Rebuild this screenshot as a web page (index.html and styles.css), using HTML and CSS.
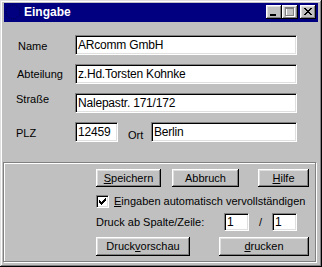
FILE: index.html
```html
<!DOCTYPE html>
<html lang="de">
<head>
<meta charset="utf-8">
<title>Eingabe</title>
<link rel="stylesheet" href="styles.css">
</head>
<body>
<div class="window">
  <div class="titlebar">
    <svg class="app-icon" width="16" height="16" viewBox="0 0 16 16"><circle cx="8" cy="8" r="7" fill="none" stroke="#00004a" stroke-width="1" stroke-dasharray="1 1"/></svg>
    <span class="title">Eingabe</span>
    <div class="tb-buttons">
      <div class="tb-btn"><svg width="16" height="14" viewBox="0 0 16 14"><rect x="4" y="9" width="6" height="2" fill="#000"/></svg></div>
      <div class="tb-btn"><svg width="16" height="14" viewBox="0 0 16 14"><path d="M4 3h9v1H4z M4 4h1v8H4z M12 4h1v8h-1z M4 11h9v1H4z" fill="#fff"/><path d="M3 2h9v2H3z M3 4h1v7H3z M11 4h1v7h-1z M3 10h9v1H3z" fill="#808080"/></svg></div>
      <div class="tb-btn tb-close"><svg width="16" height="14" viewBox="0 0 16 14"><path d="M4 3h2v1h-2z M10 3h2v1h-2z M5 4h2v1h-2z M9 4h2v1h-2z M6 5h4v1h-4z M7 6h2v1h-2z M6 7h4v1h-4z M5 8h2v1h-2z M9 8h2v1h-2z M4 9h2v1h-2z M10 9h2v1h-2z" fill="#000"/></svg></div>
    </div>
  </div>

  <div class="form">
    <div class="row">
      <span class="lbl lbl-low ind-2">Name</span>
      <div class="field f-wide">ARcomm GmbH</div>
    </div>
    <div class="row">
      <span class="lbl ind-1">Abteilung</span>
      <div class="field f-wide">z.Hd.Torsten Kohnke</div>
    </div>
    <div class="row">
      <span class="lbl lbl-high">Straße</span>
      <div class="field f-wide">Nalepastr. 171/172</div>
    </div>
    <div class="row">
      <span class="lbl lbl-low">PLZ</span>
      <div class="field f-plz">12459</div>
      <span class="lbl-ort">Ort</span>
      <div class="field f-ort">Berlin</div>
    </div>
  </div>

  <div class="panel">
    <div class="btn-row">
      <div class="btn b-speichern"><span><u>S</u>peichern</span></div>
      <div class="btn b-abbruch"><span>Abbruch</span></div>
      <div class="btn b-hilfe"><span><u>H</u>ilfe</span></div>
    </div>
    <div class="check-row">
      <div class="checkbox"><svg width="11" height="11" viewBox="0 0 11 11"><path d="M2 4h1v3H2z M3 5h1v3H3z M4 6h1v3H4z M5 5h1v3H5z M6 4h1v3H6z M7 3h1v3H7z M8 2h1v3H8z" fill="#000"/></svg></div>
      <span class="check-label"><u>E</u>ingaben automatisch vervollständigen</span>
    </div>
    <div class="druck-row">
      <span class="druck-label">Druck ab Spalte/Zeile:</span>
      <div class="field f-num">1</div>
      <span class="slash">/</span>
      <div class="field f-num">1</div>
    </div>
    <div class="btn-row2">
      <div class="btn b-vorschau"><span>Druck<u>v</u>orschau</span></div>
      <div class="btn b-drucken"><span><u>d</u>rucken</span></div>
    </div>
  </div>
</div>
</body>
</html>
```

FILE: styles.css
```css
* { box-sizing: border-box; }

html, body {
  margin: 0;
  padding: 0;
  background: #c0c0c0;
}

body {
  width: 322px;
  height: 267px;
  overflow: hidden;
  font-family: "Liberation Sans", Arial, sans-serif;
  font-size: 11px;
  color: #000;
}

.window {
  width: 322px;
  height: 267px;
  padding: 3px;
  background: #c0c0c0;
  display: flex;
  flex-direction: column;
  box-shadow: inset -1px -1px #000, inset 1px 1px #dfdfdf,
              inset -2px -2px #808080, inset 2px 2px #fff;
}

/* title bar */
.titlebar {
  height: 19px;
  margin: 0 1px;
  background: #000080;
  color: #fff;
  display: flex;
  align-items: flex-start;
  flex: none;
}

.app-icon {
  display: block;
  margin: 1px 0 0 1px;
}

.title {
  margin-left: 3px;
  font-weight: bold;
  font-size: 12px;
  line-height: 19px;
}

.tb-buttons {
  margin-left: auto;
  margin-right: 2px;
  padding-top: 2px;
  display: flex;
}

.tb-btn {
  width: 16px;
  height: 14px;
  background: #c0c0c0;
  box-shadow: inset -1px -1px #000, inset 1px 1px #fff,
              inset -2px -2px #808080, inset 2px 2px #dfdfdf;
}

.tb-btn svg { display: block; }

.tb-close { margin-left: 2px; }

/* form */
.form {
  height: 140px;
  flex: none;
  padding: 13px 0 0 13px;
  display: flex;
  flex-direction: column;
  gap: 9px;
}

.row {
  height: 20px;
  display: flex;
  align-items: center;
}

.lbl {
  width: 59px;
  flex: none;
  line-height: 13px;
}

.ind-1 { padding-left: 1px; }
.ind-2 { padding-left: 2px; }
.lbl-low { padding-top: 3px; }
.lbl-high { padding-bottom: 7px; }

.lbl-ort {
  width: 23px;
  margin-left: 10px;
  padding-top: 7px;
  line-height: 13px;
}

.field {
  height: 20px;
  background: #fff;
  border: 1px solid;
  border-color: #808080 #fff #fff #808080;
  box-shadow: inset 1px 1px #000, inset -1px -1px #dfdfdf;
  padding: 0 2px;
  font-family: "Liberation Sans", Arial, sans-serif;
  font-size: 12px;
  letter-spacing: -0.2px;
  line-height: 18px;
  white-space: nowrap;
  overflow: hidden;
  flex: none;
}

.f-wide { width: 222px; }
.f-plz { width: 43px; }
.f-ort { width: 146px; }
.f-num { width: 25px; height: 18px; line-height: 16px; }

/* bottom panel */
.panel {
  height: 100px;
  margin-right: 3px;
  flex: none;
  border: 1px solid #808080;
  box-shadow: inset 1px 1px #fff, 1px 1px #fff;
  padding: 6px 0 0 92px;
  display: flex;
  flex-direction: column;
}

.btn {
  background: #c0c0c0;
  box-shadow: inset -1px -1px #000, inset 1px 1px #fff,
              inset -2px -2px #808080, inset 2px 2px #dfdfdf;
  display: flex;
  align-items: center;
  justify-content: center;
  line-height: 13px;
  flex: none;
}

.btn u { text-underline-offset: 1px; }

.btn-row {
  height: 18px;
  display: flex;
}

.btn-row .btn { height: 18px; }

.b-speichern { width: 65px; }
.b-abbruch { width: 67px; margin-left: 11px; }
.b-hilfe { width: 51px; margin-left: 19px; }

.check-row {
  margin-top: 8px;
  height: 13px;
  display: flex;
  align-items: center;
}

.checkbox {
  width: 13px;
  height: 13px;
  background: #fff;
  border: 1px solid;
  border-color: #808080 #fff #fff #808080;
  box-shadow: inset 1px 1px #000, inset -1px -1px #dfdfdf;
  flex: none;
}

.checkbox svg { display: block; }

.check-label {
  margin-left: 5px;
  line-height: 13px;
  white-space: nowrap;
}

.druck-row {
  margin-top: 5px;
  height: 18px;
  display: flex;
  align-items: center;
}

.druck-label {
  width: 128px;
  flex: none;
  white-space: nowrap;
}

.slash {
  width: 23px;
  text-align: center;
  flex: none;
}

.btn-row2 {
  margin-top: 6px;
  height: 19px;
  display: flex;
}

.btn-row2 .btn { height: 19px; }

.b-vorschau { width: 94px; }
.b-drucken { width: 90px; margin-left: 29px; }
```
